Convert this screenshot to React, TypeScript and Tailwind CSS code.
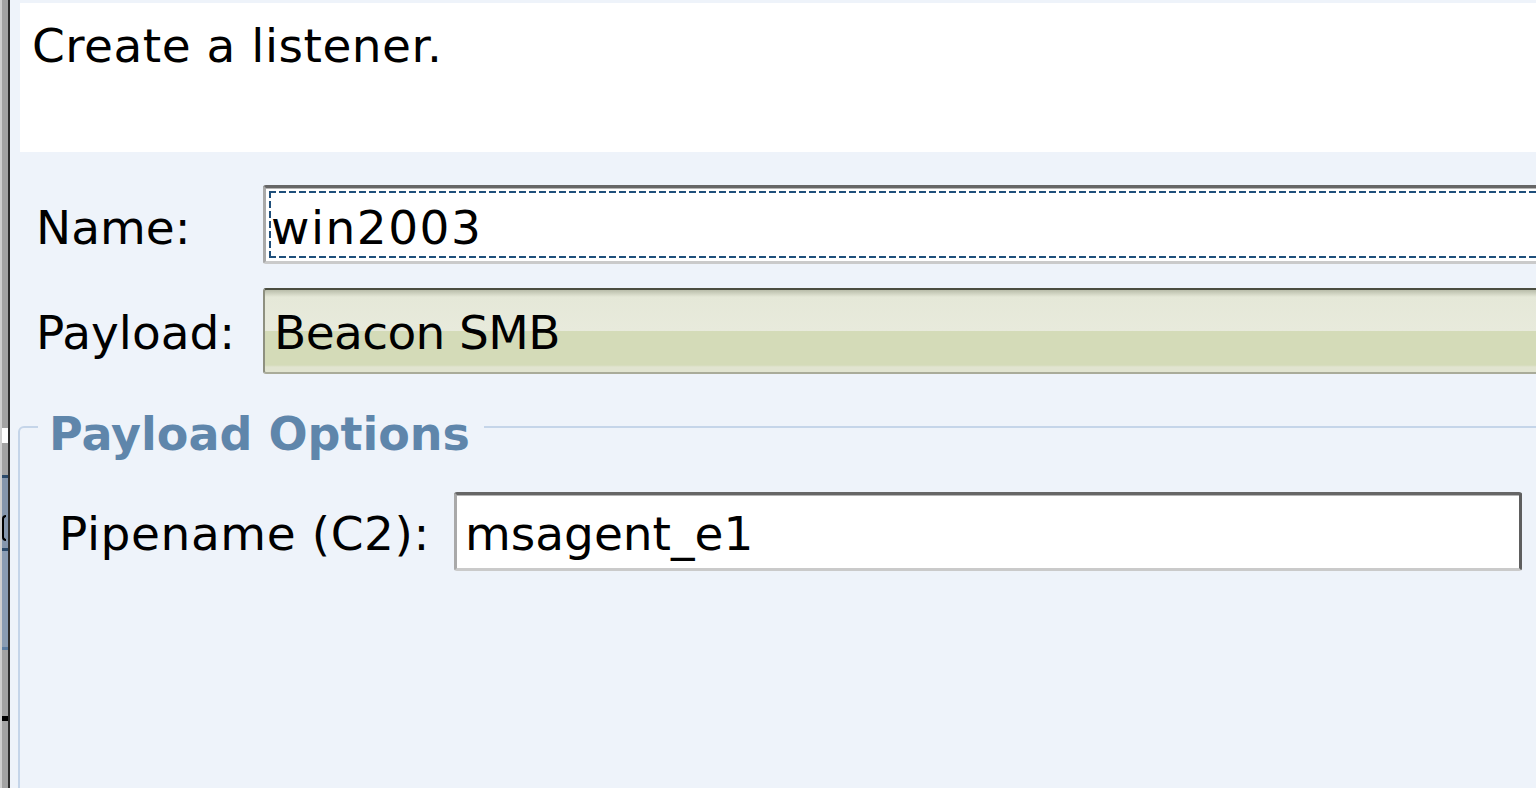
import React from "react";

function LeftStrip() {
  return (
    <div className="w-[10px] h-full shrink-0 flex">
      <div className="w-[2px] h-full bg-[#cfcfcf]" />
      <div className="w-[6px] h-full flex flex-col">
        <div className="h-[428px] bg-[#a3a3a3]" />
        <div className="h-[15px] bg-white" />
        <div className="h-[32px] bg-[#a3a3a3]" />
        <div className="h-[3px] bg-[#2c4a6a]" />
        <div className="h-[35px] bg-[#8596ac]" />
        <div className="h-[30px] bg-[#8596ac] flex items-center">
          <span className="block w-[4px] h-[26px] border-2 border-r-0 border-black rounded-l-full" />
        </div>
        <div className="h-[5px] bg-[#8596ac]" />
        <div className="h-[3px] bg-[#2c4a6a]" />
        <div className="h-[96px] bg-[#8a9cb2]" />
        <div className="h-[3px] bg-[#5d7ea2]" />
        <div className="h-[66px] bg-[#a3a3a3]" />
        <div className="h-[5px] bg-black" />
        <div className="flex-1 bg-[#a3a3a3]" />
      </div>
      <div className="w-[2px] h-full bg-[#2e2e2e]" />
    </div>
  );
}

function Dashes() {
  return (
    <div className="absolute left-[3px] top-[3px] right-[3px] bottom-[3px] pointer-events-none">
      <div className="absolute left-0 right-0 top-0 h-[2px] bg-[repeating-linear-gradient(90deg,#1f4f7b_0px,#1f4f7b_7px,transparent_7px,transparent_10px)]" />
      <div className="absolute left-0 right-0 bottom-0 h-[2px] bg-[repeating-linear-gradient(90deg,#1f4f7b_0px,#1f4f7b_7px,transparent_7px,transparent_10px)]" />
      <div className="absolute left-0 top-0 bottom-0 w-[2px] bg-[repeating-linear-gradient(180deg,#1f4f7b_0px,#1f4f7b_7px,transparent_7px,transparent_10px)]" />
    </div>
  );
}

export default function App() {
  return (
    <div className="w-[1536px] h-[788px] overflow-hidden flex bg-[#eef3fa] text-black font-['DejaVu_Sans','Verdana',sans-serif]">
      <LeftStrip />
      <div className="flex-1 min-w-0 flex flex-col pt-[3px]">
        {/* Header */}
        <div className="ml-[10px] h-[149px] shrink-0 bg-white pl-[12px] pt-[16px] text-[47px] leading-[54px] tracking-[0.5px] whitespace-nowrap">
          Create a listener.
        </div>

        {/* Name row */}
        <div className="mt-[33px] flex items-start shrink-0">
          <div className="ml-[26px] w-[227px] shrink-0 pt-[16px] text-[47px] leading-[54px] whitespace-nowrap">
            Name:
          </div>
          <div className="relative w-[1300px] h-[79px] shrink-0 bg-white border-[3px] border-t-[#666666] border-l-[#a9a9a9] border-r-[#a9a9a9] border-b-[#cacaca] rounded-[3px] shadow-[inset_0_1px_0_#b5b5b5]">
            <div className="pl-[5px] pt-[13px] text-[47px] leading-[54px] tracking-[1.5px] whitespace-nowrap">win2003</div>
            <Dashes />
          </div>
        </div>

        {/* Payload row */}
        <div className="mt-[24px] flex items-start shrink-0">
          <div className="ml-[26px] w-[227px] shrink-0 pt-[18px] text-[47px] leading-[54px] whitespace-nowrap">
            Payload:
          </div>
          <div className="w-[1300px] h-[86px] shrink-0 border-2 border-t-[#4b4d40] border-l-[#8e9080] border-r-[#8e9080] border-b-[#a9ab99] rounded-[3px] bg-[linear-gradient(to_bottom,#b9bdaa_0px,#e5e8d8_7px,#e8eadc_41px,#d4dbb8_41px,#d4dbb8_75px,#e1e4d0_77px,#e1e4d0_82px)]">
            <div className="pl-[9px] pt-[16px] text-[47px] leading-[54px] tracking-[-0.6px] whitespace-nowrap">Beacon SMB</div>
          </div>
        </div>

        {/* Payload Options */}
        <fieldset className="mt-[33px] ml-[8px] w-[1600px] h-[500px] shrink-0 border-2 border-[#c5d5e9] rounded-tl-[6px]">
          <legend className="ml-[18px] pl-[11px] pr-[14px] pt-[15px] text-[46px] leading-[24px] font-bold text-[#5f86ab] whitespace-nowrap">
            Payload Options
          </legend>
          <div className="mt-[46px] flex items-start">
            <div className="ml-[39px] w-[395px] shrink-0 pt-[15px] text-[47px] leading-[54px] tracking-[0.6px] whitespace-nowrap">
              Pipename (C2):
            </div>
            <div className="w-[1068px] h-[79px] shrink-0 bg-white border-[3px] border-t-[#666666] border-l-[#a9a9a9] border-r-[#5e5e5e] border-b-[#cacaca] rounded-[3px] shadow-[inset_0_1px_0_#b5b5b5]">
              <div className="pl-[8px] pt-[12px] text-[47px] leading-[54px] whitespace-nowrap">msagent_e1</div>
            </div>
          </div>
        </fieldset>
      </div>
    </div>
  );
}
